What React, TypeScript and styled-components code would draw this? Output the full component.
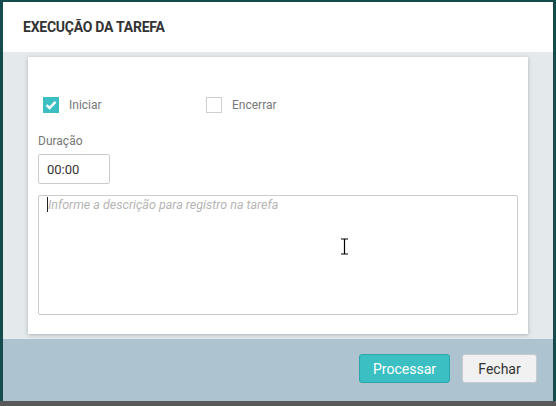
import React from "react";
import styled, { createGlobalStyle } from "styled-components";

const Global = createGlobalStyle`
  html, body { margin: 0; padding: 0; }
  body {
    width: 556px; height: 406px; overflow: hidden;
    background: #154b4c;
    font-family: Roboto, "Liberation Sans", sans-serif;
  }
`;

const Backdrop = styled.div`
  width: 556px;
  height: 406px;
  padding: 2px 3px 0 3px;
  box-sizing: border-box;
  background: linear-gradient(#154b4c 0, #154b4c 401px, #585858 401px);
`;

const Modal = styled.div`
  width: 550px;
  height: 399px;
  display: flex;
  flex-direction: column;
  background: #e4e9ec;
`;

const Header = styled.div`
  height: 50px;
  background: #fff;
  display: flex;
  align-items: center;
  padding: 0 20px;
  flex-shrink: 0;
`;

const Title = styled.h1`
  margin: 0;
  font-size: 14px;
  font-weight: 700;
  color: #333;
  letter-spacing: -0.25px;
`;

const Body = styled.div`
  padding: 5px 25px 5px 25px;
  flex: 1;
  display: flex;
`;

const Card = styled.div`
  flex: 1;
  background: #fff;
  box-shadow: 0 1px 4px rgba(0, 0, 0, 0.25);
  padding: 40px 10px 18px 10px;
  display: flex;
  flex-direction: column;
`;

const CheckRow = styled.div`
  display: flex;
  align-items: center;
  height: 16px;
  padding-left: 5px;
`;

const CheckItem = styled.label<{ $width?: number }>`
  display: flex;
  align-items: center;
  gap: 10px;
  width: ${(p) => (p.$width ? `${p.$width}px` : "auto")};
  font-size: 12px;
  color: #777;
`;

const Box = styled.span<{ $checked?: boolean }>`
  width: 16px;
  height: 16px;
  box-sizing: border-box;
  display: inline-flex;
  align-items: center;
  justify-content: center;
  background: ${(p) => (p.$checked ? "#3bbfc2" : "#fff")};
  border: 1px solid ${(p) => (p.$checked ? "#3bbfc2" : "#cfcfcf")};
`;

const FieldLabel = styled.div`
  margin-top: 20px;
  font-size: 12px;
  color: #777;
  height: 17px;
  line-height: 17px;
`;

const TimeInput = styled.div`
  margin-top: 4px;
  width: 72px;
  height: 30px;
  box-sizing: border-box;
  border: 1px solid #ccc;
  border-radius: 2px;
  display: flex;
  align-items: center;
  padding-left: 8px;
  font-size: 13px;
  color: #333;
`;

const TextArea = styled.div`
  position: relative;
  margin-top: 11px;
  height: 120px;
  box-sizing: border-box;
  border: 1px solid #ccc;
  border-radius: 2px;
  padding: 0 8px;
  line-height: 15px;
`;

const Placeholder = styled.span`
  font-size: 12.5px;
  font-style: italic;
  color: #b5b5b5;
  line-height: 15px;
  border-left: 1px solid #222;
`;

const Cursor = styled.svg`
  position: absolute;
  left: 301px;
  top: 42px;
`;

const Footer = styled.div`
  height: 62px;
  flex-shrink: 0;
  background: #adc4d0;
  display: flex;
  justify-content: flex-end;
  align-items: flex-start;
  padding: 15px 16px 0 0;
  box-sizing: border-box;
  gap: 12px;
`;

const Button = styled.button<{ $primary?: boolean }>`
  height: 29px;
  box-sizing: border-box;
  border-radius: 3px;
  font-family: Roboto, "Liberation Sans", sans-serif;
  font-size: 14px;
  padding: 0;
  width: ${(p) => (p.$primary ? "91px" : "75px")};
  background: ${(p) => (p.$primary ? "#3bbfc2" : "#f1f1f1")};
  color: ${(p) => (p.$primary ? "#fff" : "#333")};
  border: 1px solid ${(p) => (p.$primary ? "#2ea6a9" : "#c4ccd1")};
`;

export default function App() {
  return (
    <>
      <Global />
      <Backdrop>
        <Modal>
          <Header>
            <Title>EXECUÇÃO DA TAREFA</Title>
          </Header>
          <Body>
            <Card>
              <CheckRow>
                <CheckItem $width={163}>
                  <Box $checked>
                    <svg width="12" height="10" viewBox="0 0 12 10">
                      <path d="M1.5 5.2 L4.6 8 L10.5 1.8" fill="none" stroke="#fff" strokeWidth="2.4" />
                    </svg>
                  </Box>
                  Iniciar
                </CheckItem>
                <CheckItem>
                  <Box />
                  Encerrar
                </CheckItem>
              </CheckRow>
              <FieldLabel>Duração</FieldLabel>
              <TimeInput>00:00</TimeInput>
              <TextArea>
                <Placeholder>Informe a descrição para registro na tarefa</Placeholder>
                <Cursor width="9" height="17" viewBox="0 0 9 17">
                  <path d="M1 1 H8 M4.5 1 V16 M1 16 H8" stroke="#000" strokeWidth="1.2" fill="none" />
                </Cursor>
              </TextArea>
            </Card>
          </Body>
          <Footer>
            <Button $primary>Processar</Button>
            <Button>Fechar</Button>
          </Footer>
        </Modal>
      </Backdrop>
    </>
  );
}
